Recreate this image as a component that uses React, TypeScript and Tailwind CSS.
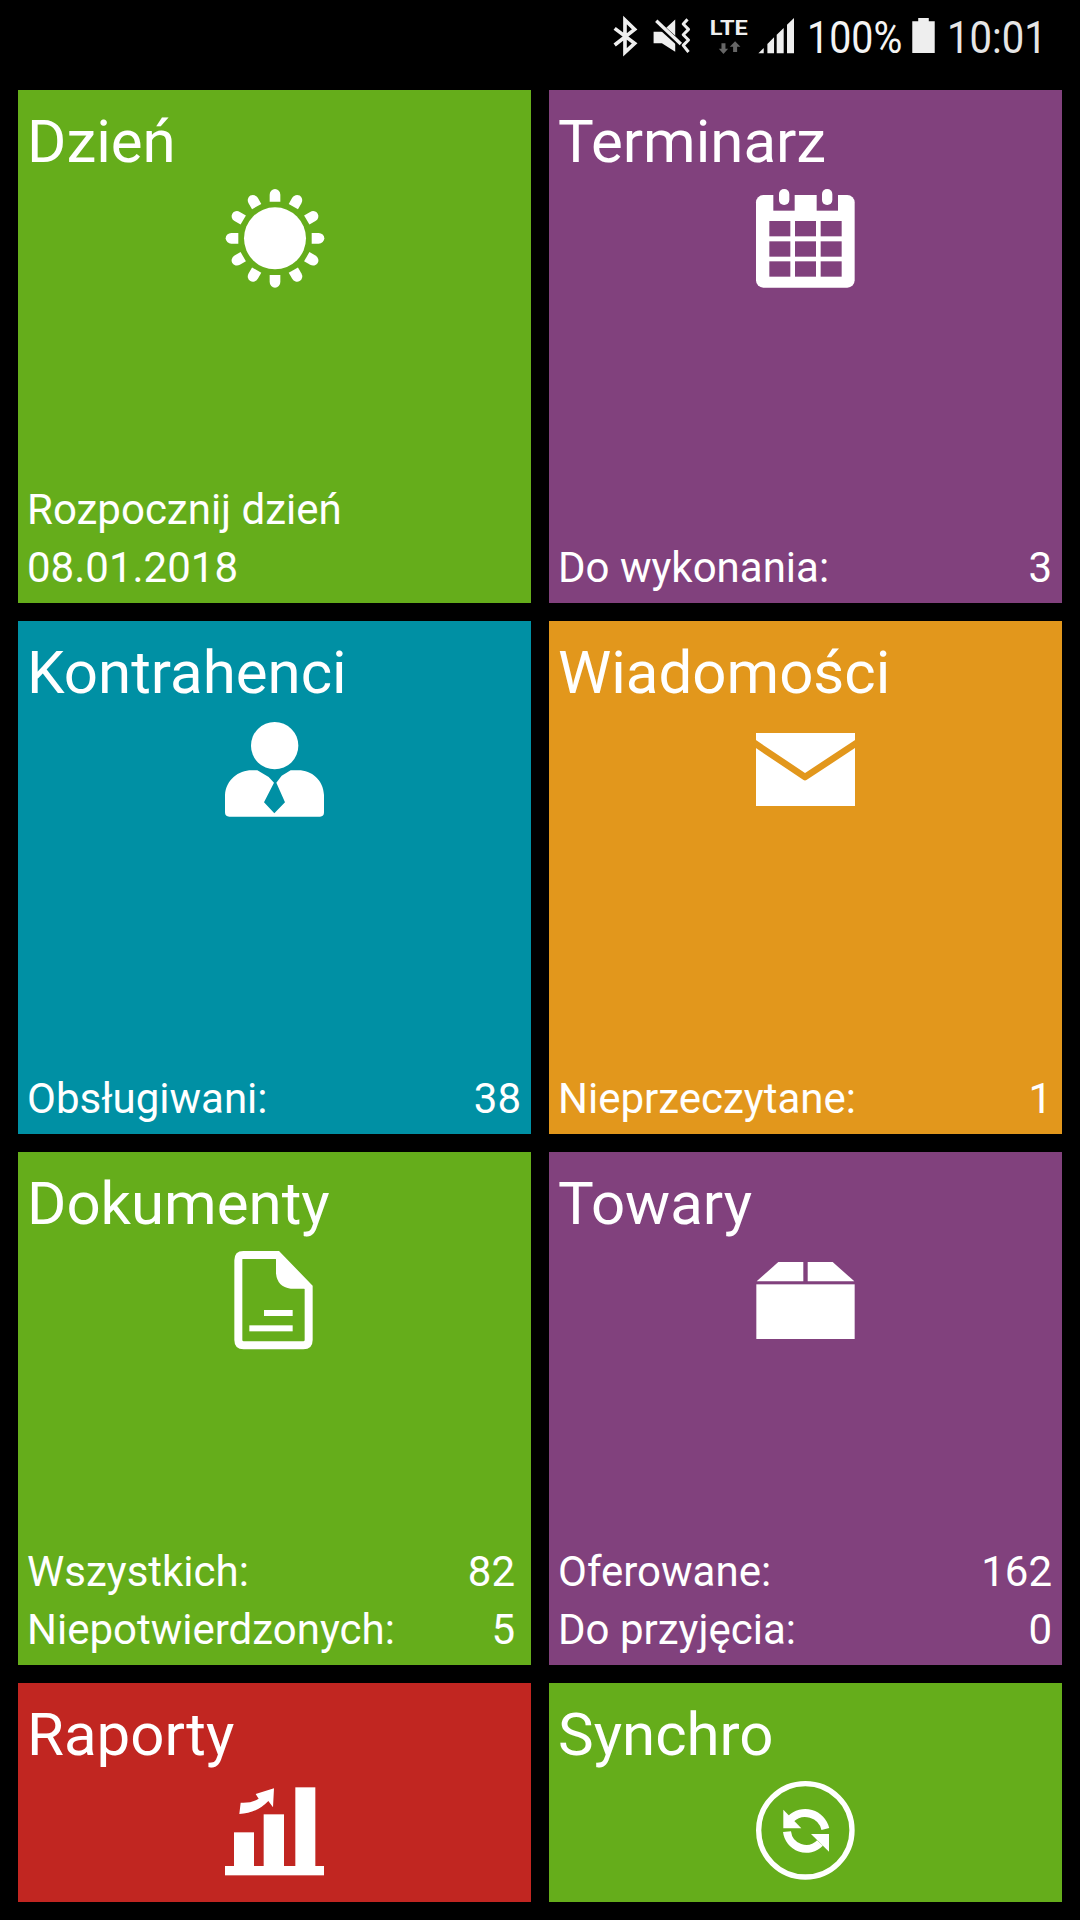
const FONT = { fontFamily: "Roboto, sans-serif" };

const SunIcon = ({ view }: { view: string }) => (
  <svg viewBox={view} className="w-[150px] h-[130px]" fill="#fff">
    <circle cx="225" cy="205" r="93" />
    {[0, 30, 60, 90, 120, 150, 180, 210, 240, 270, 300, 330].map((deg) => (
      <path
        key={deg}
        transform={`translate(225 205) rotate(${deg})`}
        d="M-16 -110 V-131 A16 17 0 0 1 16 -131 V-110 Z"
      />
    ))}
  </svg>
);

const CalendarIcon = ({ view, bg }: { view: string; bg: string }) => (
  <svg viewBox={view} className="w-[150px] h-[130px]">
    <rect x="78" y="75" width="296" height="278" rx="22" fill="#fff" />
    <rect x="130" y="60" width="64" height="62" fill={bg} />
    <rect x="260" y="60" width="64" height="62" fill={bg} />
    <rect x="147" y="57" width="31" height="48" rx="15" fill="#fff" />
    <rect x="276" y="57" width="31" height="48" rx="15" fill="#fff" />
    {[118, 195, 272].map((x) =>
      [153, 214, 274].map((y) => (
        <rect key={`${x}-${y}`} x={x} y={y} width="63" height="46" fill={bg} />
      )),
    )}
  </svg>
);

const PersonIcon = ({ view }: { view: string }) => (
  <svg viewBox={view} className="w-[150px] h-[130px]" fill="#fff">
    <circle cx="224" cy="122" r="71" />
    <path d="M75 270 C78 225 115 196 155 196 L172 196 L206 216 L222 233 L192 292 L223 325 L255 292 L229 233 L245 212 L272 196 L295 196 C335 196 370 225 372 270 L372 322 Q372 335 360 335 L88 335 Q75 335 75 322 Z" />
  </svg>
);

const MailIcon = ({ view, bg }: { view: string; bg: string }) => (
  <svg viewBox={view} className="w-[150px] h-[130px]">
    <rect x="78" y="84" width="297" height="219" fill="#fff" />
    <path
      d="M70 112 L225 216 L383 112"
      fill="none"
      stroke={bg}
      strokeWidth="20"
      strokeLinejoin="round"
    />
  </svg>
);

const DocIcon = ({ view }: { view: string }) => (
  <svg viewBox={view} className="w-[150px] h-[130px]" fill="#fff">
    <path
      d="M130 45 H232 L326 142 V300 Q326 316 310 316 H131 Q115 316 115 300 V61 Q115 45 130 45 Z"
      fill="none"
      stroke="#fff"
      strokeWidth="24"
    />
    <path d="M228 45 V100 Q232 142 272 146 H330 Z" />
    <rect x="192" y="210" width="86" height="18" />
    <rect x="148" y="256" width="130" height="18" />
  </svg>
);

const BoxIcon = ({ view }: { view: string }) => (
  <svg viewBox={view} className="w-[150px] h-[130px]" fill="#fff">
    <path d="M145 66 H220 V124 H80 Z" />
    <path d="M233 66 H308 L373 124 H233 Z" />
    <rect x="79" y="133" width="295" height="164" />
  </svg>
);

const ChartIcon = ({ view }: { view: string }) => (
  <svg viewBox={view} className="w-[150px] h-[130px]" fill="#fff">
    <rect x="75" y="288" width="297" height="28" />
    <rect x="102" y="187" width="60" height="102" />
    <rect x="191" y="133" width="61" height="156" />
    <rect x="286" y="52" width="60" height="237" />
    <path d="M118 132 L122 98 Q155 100 176 86 L167 72 L222 55 L219 112 L205 93 Q170 130 118 132 Z" />
  </svg>
);

const SyncIcon = ({ view }: { view: string }) => (
  <svg viewBox={view} className="w-[150px] h-[130px]" fill="#fff">
    <circle cx="226" cy="184" r="140" fill="none" stroke="#fff" strokeWidth="16" />
    <path d="M182 150 A62 62 0 0 1 286 180" fill="none" stroke="#fff" strokeWidth="24" />
    <path d="M171 188 A58 58 0 0 0 270 222" fill="none" stroke="#fff" strokeWidth="24" />
    <path d="M160 122 V178 H214 Z" />
    <path d="M297 195 V248 L243 195 Z" />
  </svg>
);

const StatusIcons = () => (
  <svg viewBox="95 0 550 270" className="h-[90px] w-[183px] shrink-0 self-start" fill="#eee">
    <polyline
      points="103,85 163,130 134,157 134,60 163,88 103,135"
      fill="none"
      stroke="#eee"
      strokeWidth="11"
    />
    <path d="M220 95 H245 L285 58 V155 L245 130 H220 Z" />
    <path d="M222 62 L305 137" stroke="#000" strokeWidth="18" />
    <path d="M228 62 L302 132" stroke="#eee" strokeWidth="10" />
    <path
      d="M322 58 L309 72 L325 88 L309 104 L325 120 L309 136 L325 156"
      fill="none"
      stroke="#eee"
      strokeWidth="9"
      strokeLinejoin="round"
    />
    <text
      x="389"
      y="105"
      fontSize="60"
      fontWeight="700"
      fontFamily="Roboto, sans-serif"
      textLength="114"
      lengthAdjust="spacingAndGlyphs"
    >
      LTE
    </text>
    <path d="M424 130 H436 V146 H444 L430 162 L416 146 H424 Z" fill="#666" />
    <path d="M459 156 H471 V140 H481 L465 124 L449 140 H459 Z" fill="#666" />
    <path d="M535 160 L551 144 V160 Z" />
    <path d="M562 132 L582 112 V160 H562 Z" />
    <path d="M590 104 L611 84 V160 H590 Z" />
    <path d="M621 74 L642 54 V160 H621 Z" />
  </svg>
);

const Battery = () => (
  <svg viewBox="0 0 68 106" className="h-[35px] w-[23px]" fill="#eee">
    <path d="M18 0 H50 V10 H68 V106 H0 V10 H18 Z" />
  </svg>
);

type Row = { label: string; value?: string };

type TileProps = {
  title: string;
  bg: string;
  rows: Row[];
  icon: React.ReactNode;
  valueEnd?: string;
  className?: string;
};

const Tile = ({ title, bg, rows, icon, valueEnd = "pr-[10px]", className = "h-[513px]" }: TileProps) => (
  <div className={`flex flex-col overflow-hidden text-white ${bg} ${className}`}>
    <h2 className="h-[84px] pl-[9px] pt-[21px] text-[60px] leading-[62px] font-normal whitespace-nowrap">{title}</h2>
    <div className="pl-[182px]">{icon}</div>
    <div className={`mt-auto pb-[7px] pl-[9px] ${valueEnd}`}>
      {rows.map((row) => (
        <div key={row.label} className="flex h-[58px] items-center justify-between text-[42px]">
          <span>{row.label}</span>
          {row.value && <span>{row.value}</span>}
        </div>
      ))}
    </div>
  </div>
);

export default function App() {
  const green = "bg-[#65ad1b]";
  const purple = "bg-[#81417d]";

  return (
    <div className="flex h-[1920px] w-[1080px] flex-col overflow-hidden bg-black" style={FONT}>
      <div className="flex h-[90px] shrink-0 items-center justify-end pr-[35px] pb-[15px] text-[#f4f4f4]">
        <StatusIcons />
        <span className="ml-[12px] inline-block w-[95px] origin-left scale-x-[0.895] text-[44px] leading-none whitespace-nowrap">
          100%
        </span>
        <span className="ml-[10px] -mt-[4px]">
          <Battery />
        </span>
        <span className="ml-[12px] inline-block w-[98px] origin-left scale-x-[0.91] text-[44px] leading-none whitespace-nowrap text-[#e6e6e6]">
          10:01
        </span>
      </div>

      <div className="grid grid-cols-[513px_513px] gap-x-[18px] gap-y-[18px] px-[18px]">
        <Tile
          title="Dzień"
          bg={green}
          icon={<SunIcon view="0 12 450 390" />}
          rows={[{ label: "Rozpocznij dzień" }, { label: "08.01.2018" }]}
        />
        <Tile
          title="Terminarz"
          bg={purple}
          icon={<CalendarIcon view="3 12 450 390" bg="#81417d" />}
          rows={[{ label: "Do wykonania:", value: "3" }]}
        />
        <Tile
          title="Kontrahenci"
          bg="bg-[#0090a4]"
          icon={<PersonIcon view="0 0 450 390" />}
          rows={[{ label: "Obsługiwani:", value: "38" }]}
        />
        <Tile
          title="Wiadomości"
          bg="bg-[#e2971c]"
          icon={<MailIcon view="3 0 450 390" bg="#e2971c" />}
          rows={[{ label: "Nieprzeczytane:", value: "1" }]}
        />
        <Tile
          title="Dokumenty"
          bg={green}
          valueEnd="pr-[16px]"
          icon={<DocIcon view="0 -12 450 390" />}
          rows={[
            { label: "Wszystkich:", value: "82" },
            { label: "Niepotwierdzonych:", value: "5" },
          ]}
        />
        <Tile
          title="Towary"
          bg={purple}
          icon={<BoxIcon view="3 -12 450 390" />}
          rows={[
            { label: "Oferowane:", value: "162" },
            { label: "Do przyjęcia:", value: "0" },
          ]}
        />
        <Tile
          title="Raporty"
          bg="bg-[#c12621]"
          className="h-[219px]"
          icon={<ChartIcon view="0 -12 450 390" />}
          rows={[]}
        />
        <Tile
          title="Synchro"
          bg={green}
          className="h-[219px]"
          icon={<SyncIcon view="3 -9 450 390" />}
          rows={[]}
        />
      </div>
    </div>
  );
}
